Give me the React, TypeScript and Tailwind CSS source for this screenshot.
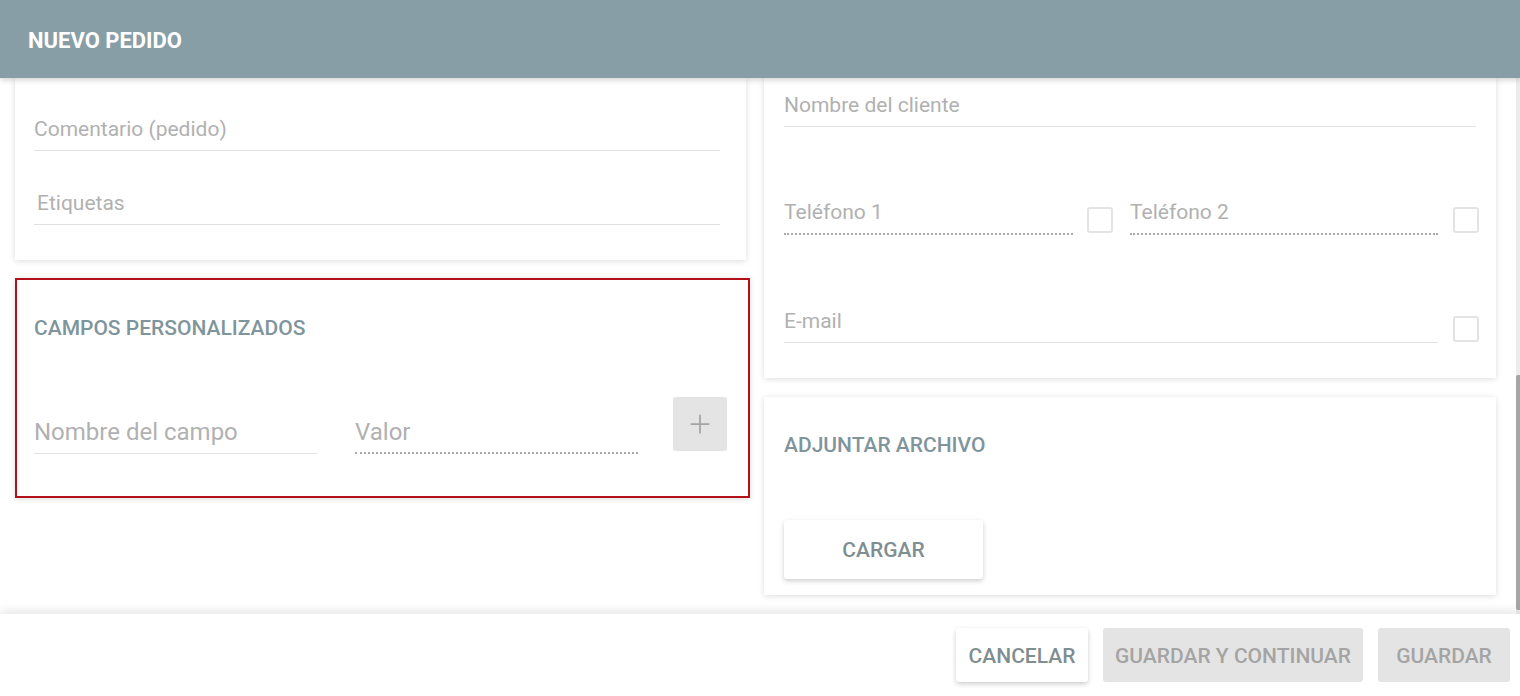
import React from 'react';
import { Plus } from 'lucide-react';

function Field({ label, dotted = false, className = '' }: { label: string; dotted?: boolean; className?: string }) {
  return (
    <div
      className={`pb-[9px] text-[21px] leading-6 text-[#b1b1b1] ${
        dotted ? 'border-b-2 border-dotted border-[#a9a9a9]' : 'border-b border-[#e2e2e2]'
      } ${className}`}
    >
      {label}
    </div>
  );
}

function Check() {
  return <div className="h-[26px] w-[26px] shrink-0 rounded-[3px] border-2 border-[#e3e3e3] bg-white" />;
}

export default function App() {
  return (
    <div className="flex h-[696px] w-[1520px] flex-col overflow-hidden bg-white font-['Roboto',sans-serif]">
      {/* Header */}
      <header className="relative z-10 flex h-[78px] shrink-0 items-center bg-[#879ea6] pl-[28px] pt-[2px] shadow-[0_2px_6px_rgba(0,0,0,0.18)]">
        <h1 className="text-[22px] font-bold text-white">NUEVO PEDIDO</h1>
      </header>

      {/* Scroll area */}
      <div className="flex min-h-0 flex-1">
        <div className="flex flex-1 gap-[18px] overflow-hidden pl-[15px] pr-[20px]">
          {/* Left column */}
          <div className="flex w-[731px] shrink-0 flex-col">
            <div className="bg-white pb-[35px] pl-[19px] pr-[26px] pt-[39px] shadow-[0_1px_6px_rgba(0,0,0,0.14)]">
              <Field label="Comentario (pedido)" />
              <Field label="Etiquetas" className="mt-[40px] pl-[3px]" />
            </div>

            <div className="-mr-[4px] mt-[18px] border-2 border-[#b3101a] bg-white pb-[42px] pl-[17px] pt-[36px] shadow-[0_1px_6px_rgba(0,0,0,0.14)]">
              <h2 className="text-[21px] font-medium leading-6 text-[#7f959c]">CAMPOS PERSONALIZADOS</h2>
              <div className="mt-[57px] flex items-end">
                <div className="w-[283px] border-b border-[#e2e2e2] pb-[7px] text-[24px] leading-7 text-[#b1b1b1]">
                  Nombre del campo
                </div>
                <div className="ml-[38px] w-[283px] border-b-2 border-dotted border-[#a9a9a9] pb-[6px] text-[24px] leading-7 text-[#b1b1b1]">
                  Valor
                </div>
                <button className="mb-[3px] ml-[35px] flex h-[54px] w-[54px] items-center justify-center rounded-[3px] bg-[#e4e4e4] text-[#a3a3a3]">
                  <Plus size={30} strokeWidth={1.4} />
                </button>
              </div>
            </div>
          </div>

          {/* Right column */}
          <div className="flex w-[732px] shrink-0 flex-col">
            <div className="bg-white pb-[35px] pl-[20px] pr-[17px] pt-[15px] shadow-[0_1px_6px_rgba(0,0,0,0.14)]">
              <Field label="Nombre del cliente" className="mr-[3px]" />
              <div className="mt-[73px] flex items-end">
                <Field label="Teléfono 1" dotted className="w-[289px]" />
                <div className="mb-[2px] ml-[14px]">
                  <Check />
                </div>
                <Field label="Teléfono 2" dotted className="ml-[17px] w-[308px]" />
                <div className="mb-[2px] ml-[15px]">
                  <Check />
                </div>
              </div>
              <div className="mt-[74px] flex items-end">
                <Field label="E-mail" className="w-[654px]" />
                <div className="mb-[1px] ml-[15px]">
                  <Check />
                </div>
              </div>
            </div>

            <div className="mt-[19px] bg-white pb-[16px] pl-[20px] pt-[36px] shadow-[0_1px_6px_rgba(0,0,0,0.14)]">
              <h2 className="text-[21px] font-medium leading-6 text-[#7f959c]">ADJUNTAR ARCHIVO</h2>
              <button className="mt-[63px] h-[59px] w-[199px] rounded-[3px] bg-white pt-[2px] text-[21px] font-medium text-[#7f8e90] shadow-[0_2px_5px_rgba(0,0,0,0.2)]">
                CARGAR
              </button>
            </div>
          </div>
        </div>

        {/* Scrollbar */}
        <div className="flex w-[4px] shrink-0 flex-col bg-[#ececec] pt-[297px] pb-[4px]">
          <div className="flex-1 rounded-l-[2px] bg-[#a6a6a6]" />
        </div>
      </div>

      {/* Footer */}
      <footer className="relative z-10 flex h-[82px] shrink-0 items-center justify-end gap-[15px] bg-white pr-[10px] shadow-[0_-3px_10px_rgba(0,0,0,0.1)]">
        <button className="h-[54px] w-[132px] rounded-[3px] bg-white pt-[3px] text-[21px] font-medium text-[#7f8e90] shadow-[0_2px_5px_rgba(0,0,0,0.2)]">
          CANCELAR
        </button>
        <button className="h-[54px] w-[260px] rounded-[3px] bg-[#e4e4e4] pt-[3px] text-[21px] font-medium text-[#a4a4a4]">
          GUARDAR Y CONTINUAR
        </button>
        <button className="h-[54px] w-[132px] rounded-[3px] bg-[#e4e4e4] pt-[3px] text-[21px] font-medium text-[#a4a4a4]">
          GUARDAR
        </button>
      </footer>
    </div>
  );
}
